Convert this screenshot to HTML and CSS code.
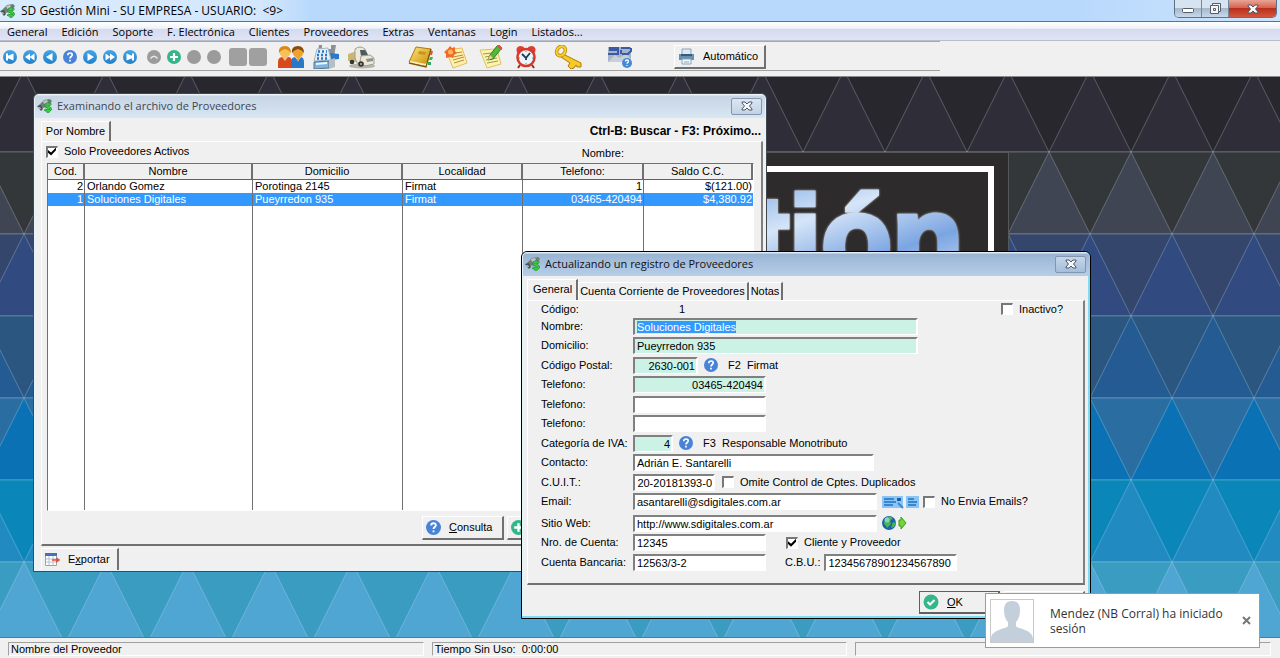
FILE: index.html
```html
<!DOCTYPE html>
<html lang="es">
<head>
<meta charset="utf-8">
<title>SD Gestión Mini</title>
<link rel="stylesheet" href="styles.css">
</head>
<body>
<svg class="defs" aria-hidden="true">
  <defs>
    <linearGradient id="blue" x1="0" y1="0" x2="0" y2="1"><stop offset="0" stop-color="#45a5e8"/><stop offset="1" stop-color="#2380c8"/></linearGradient>
    <linearGradient id="gold" x1="0" y1="0" x2="1" y2="1"><stop offset="0" stop-color="#ffe680"/><stop offset="1" stop-color="#c98a00"/></linearGradient>
    <symbol id="app" viewBox="0 0 16 16">
      <path d="M1 8L7 2l6-1 2 2-4 6-6 1z" fill="#6d7f78"/><path d="M6 3l4-1 1 2-4 2z" fill="#b9c8c4"/><path d="M0 8l4-1 2 4-2 2z" fill="#4b5552"/><path d="M1 9l3 1-1 1z" fill="#fff"/>
      <path d="M14 7c-2-2-6-1-5 1 1 1.500 5 1 4.500 3.500-1 2-4 1.500-6 0M11 5v10" fill="none" stroke="#1d8f2b" stroke-width="2.600"/><path d="M14 7c-2-2-6-1-5 1 1 1.500 5 1 4.500 3.500-1 2-4 1.500-6 0M11 5v10" fill="none" stroke="#3fc94a" stroke-width="1.300"/>
    </symbol>
    <symbol id="help" viewBox="0 0 14 14"><circle cx="7" cy="7" r="7" fill="#4883d8"/><path d="M4.800 5.200c0-3 4.600-2.800 4.400-.2C9.100 6.500 7 6.600 7 8.500M7 9.800v1.700" fill="none" stroke="#fff" stroke-width="1.700"/></symbol>
    <symbol id="plus" viewBox="0 0 14 14"><circle cx="7" cy="7" r="7" fill="#35b58b"/><path d="M7 3v8M3 7h8" stroke="#fff" stroke-width="2.200"/></symbol>
    <symbol id="first" viewBox="0 0 14 14"><circle cx="7" cy="7" r="7" fill="url(#blue)"/><path d="M3 3.500h2v2.300L10.500 3.500v7L5 8.200v2.300H3z" fill="#fff"/></symbol>
    <symbol id="rew" viewBox="0 0 14 14"><circle cx="7" cy="7" r="7" fill="url(#blue)"/><path d="M2 7L7 3.500v7zM6.500 7l5-3.500v7z" fill="#fff"/></symbol>
    <symbol id="prev" viewBox="0 0 14 14"><circle cx="7" cy="7" r="7" fill="url(#blue)"/><path d="M3 7l6.500-4v8z" fill="#fff"/></symbol>
    <symbol id="cross" viewBox="0 0 12 10"><path d="M1 1h3l2 2 2-2h3v1L8.500 5 11 8v1H8L6 7 4 9H1V8l2.500-3L1 2z" fill="#f7f7f7" stroke="#4d566b"/></symbol>
  </defs>
</svg>

<header class="titlebar">
  <svg class="app-icon" aria-hidden="true"><use href="#app"/></svg>
  <h1 class="title">SD Gestión Mini - SU EMPRESA - USUARIO: &nbsp;&lt;9&gt;</h1>
  <div class="controls">
    <button class="ctl" aria-label="Minimizar"><svg width="14" height="12" viewBox="0 0 14 12"><rect x="1.500" y="5.500" width="11" height="4" rx="1" fill="#fff" stroke="#565d6b"/></svg></button>
    <button class="ctl" aria-label="Restaurar"><svg width="14" height="13" viewBox="0 0 14 13"><path d="M4.500 1.500h8v8h-2v2h-8v-8h2z" fill="#f4f6f8" stroke="#565d6b"/><path d="M4.500 3.500h6v6M5.500 6.500h2v2h-2z" fill="none" stroke="#565d6b"/></svg></button>
    <button class="ctl ctl-close" aria-label="Cerrar"><svg width="12" height="10"><use href="#cross"/></svg></button>
  </div>
</header>

<nav class="menubar">
  <a href="#">General</a><a href="#">Edición</a><a href="#">Soporte</a><a href="#">F. Electrónica</a><a href="#">Clientes</a><a href="#">Proveedores</a><a href="#">Extras</a><a href="#">Ventanas</a><a href="#">Login</a><a href="#">Listados...</a>
</nav>

<div class="toolbar">
  <div class="tools">
    <div class="nav-icons">
      <button class="tool" aria-label="Primero"><svg><use href="#first"/></svg></button>
      <button class="tool" aria-label="Página anterior"><svg><use href="#rew"/></svg></button>
      <button class="tool" aria-label="Anterior"><svg><use href="#prev"/></svg></button>
      <button class="tool" aria-label="Consulta"><svg><use href="#help"/></svg></button>
      <button class="tool flip" aria-label="Siguiente"><svg><use href="#prev"/></svg></button>
      <button class="tool flip" aria-label="Página siguiente"><svg><use href="#rew"/></svg></button>
      <button class="tool flip" aria-label="Último"><svg><use href="#first"/></svg></button>
    </div>
    <div class="nav-icons">
      <button class="tool" aria-label="Subir"><svg viewBox="0 0 14 14"><circle cx="7" cy="7" r="7" fill="#9b9b9b"/><path d="M3.500 8.500Q7 4 10.500 8.500" fill="none" stroke="#e8e8e8" stroke-width="1.500"/></svg></button>
      <button class="tool" aria-label="Agregar"><svg><use href="#plus"/></svg></button>
      <button class="tool" aria-label="Cambiar"><svg viewBox="0 0 14 14"><circle cx="7" cy="7" r="7" fill="#9b9b9b"/></svg></button>
      <button class="tool" aria-label="Borrar"><svg viewBox="0 0 14 14"><circle cx="7" cy="7" r="7" fill="#9b9b9b"/></svg></button>
    </div>
    <div class="squares"><button class="square" aria-label="Aceptar"></button><button class="square" aria-label="Cancelar"></button></div>
    <div class="big-icons">
      <button class="big" aria-label="Clientes"><svg viewBox="0 0 28 24"><path d="M1 23v-6q0-5 5-5h5q4 0 4 5v6z" fill="#d84a1c"/><path d="M5 12l3 4 3-4z" fill="#ffb98a"/><circle cx="8" cy="7" r="5.500" fill="#f8c058"/><path d="M2 8q-1-7 6-7 6 0 6 7-2-3-6-4-4 1-6 4z" fill="#d98a14"/><path d="M14 23v-6q0-5 5-5h4q4 0 4 5v6z" fill="#2878cc"/><path d="M18 12l3 4 3-4z" fill="#fff"/><path d="M19 12l2 5 2-5z" fill="#f0a030"/><circle cx="21" cy="7" r="5.500" fill="#efa22c"/><path d="M15 8q-1-7 6-7 6 0 6 7-2-3-6-4-4 1-6 4z" fill="#8a4a14"/></svg></button>
      <button class="big" aria-label="Facturación"><svg viewBox="0 0 28 24"><path d="M7 0h17l-2 12-17 1z" fill="#8b9195"/><path d="M10 0h9v4h-9z" fill="#f0f2f2"/><path d="M18 8l9 1v5l-8 1z" fill="#2878cc"/><path d="M5 4l11-1 3 12-17 1z" fill="#e6edf2" stroke="#a6b5c2"/><path d="M6 6.500h2m2 0h2m2 0h1M5 10h2m2 0h2m2 0h2M5 13.500h2m2 0h2m2 0h2" stroke="#2878cc" stroke-width="2.400"/><path d="M2 17l15-1v7L2 24z" fill="#7fb4e2" stroke="#51738e"/><path d="M4 19l11-1" stroke="#e9f5ff" stroke-width="2"/><path d="M17 15l6-2v9l-6 2z" fill="#b5bfc4"/></svg></button>
      <button class="big" aria-label="Proveedores"><svg viewBox="0 0 28 24"><ellipse cx="15" cy="21" rx="13" ry="2.500" fill="#b8b5ad"/><path d="M1 9l9-3v11l-9-1z" fill="#c9b675"/><path d="M8 4q5-4 10 0l3 7-4 9-7-2-2-5z" fill="#ece9de" stroke="#a19d8d"/><path d="M13 5l5 0 3 5-7 1z" fill="#4e5964"/><path d="M14 11l9-1 4 3v6l-9 2-5-4z" fill="#ede8d4" stroke="#a19d8d"/><path d="M19 14l7-1v3l-6 1z" fill="#8b9296"/><circle cx="14" cy="19" r="2.800" fill="#353535"/><circle cx="5" cy="17" r="2.300" fill="#353535"/><circle cx="14" cy="19" r="1" fill="#bbb"/></svg></button>
    </div>
    <div class="big-icons agenda">
      <button class="big" aria-label="Agenda"><svg viewBox="0 0 28 24"><path d="M9 2l15 2-5 17-17-4z" fill="url(#gold)" stroke="#a97c12"/><path d="M3 17l16 3 2-3" fill="none" stroke="#fff2bc" stroke-width="2"/><path d="M2 18l17 4 5-18" fill="none" stroke="#805707" stroke-width="1.300"/><path d="M12 6l7 1-1 3-7-1z" fill="#c9951c"/><path d="M24 6h2l-1 4h-2" fill="#e3542e"/><path d="M23 12h3l-1 3h-3" fill="#42b549"/><path d="M21 17h3v3h-3" fill="#2dab5e"/></svg></button>
      <button class="big" aria-label="Novedades"><svg viewBox="0 0 28 24"><path d="M4 5l16-2 5 15-14 5z" fill="#fff0aa" stroke="#e4bd5c"/><path d="M13 8l7-1M11 12l10-2M11 15l11-3M12 18l10-3" stroke="#b58a40"/><path d="M8 1l2 2 3-1v4l2 2-3 2-1 3-3-1-4 1v-4L2 7l3-2z" fill="#ef6b27"/><circle cx="8.500" cy="7" r="2.500" fill="#ffb45d"/></svg></button>
      <button class="big" aria-label="Notas"><svg viewBox="0 0 28 24"><path d="M3 5l17-1 4 15-14 4z" fill="#fff3a8" stroke="#d6c468"/><path d="M6 9l9-1M8 12l6-1M9 15l11-2M10 18l11-2" stroke="#9d9464"/><path d="M11 15l2-5 7-9 4 3-8 10z" fill="#54b838" stroke="#2d7e22"/><path d="M20 1l2-1 3 3-1 2z" fill="#df4d46" stroke="#df4d46"/><path d="M11 15l2-5 3 3z" fill="#f4cf90"/></svg></button>
      <button class="big" aria-label="Alarma"><svg viewBox="0 0 28 24"><path d="M8 20l-2 3M20 20l2 3" stroke="#913025" stroke-width="2"/><path d="M5 8q-2-6 3-7 4 0 5 3zM23 8q2-6-3-7-4 0-5 3z" fill="#dd3e30"/><circle cx="14" cy="12.500" r="8.500" fill="#e7f5fd" stroke="#d6392b" stroke-width="2.500"/><path d="M10 9l4 4 4-5M14 13v2" fill="none" stroke="#25394b" stroke-width="1.800"/><path d="M14 6v1M7 13h1M14 19v-1M21 13h-1" stroke="#4b91c1"/></svg></button>
    </div>
    <button class="big key" aria-label="Claves"><svg viewBox="0 0 28 24"><path d="M9 9l18 9v4h-4l-1-2-2 3-3 1-3-3 2-3-9-6z" fill="#f5c926" stroke="#ac7c08"/><ellipse cx="7" cy="6" rx="4" ry="5" transform="rotate(35 7 6)" fill="#f1f1ed" stroke="#b88205" stroke-width="3.600"/><ellipse cx="7" cy="6" rx="4" ry="5" transform="rotate(35 7 6)" fill="none" stroke="#f8cf30" stroke-width="2.200"/></svg></button>
    <button class="big" aria-label="Ayuda SD"><svg viewBox="0 0 28 24"><path d="M2 2h23v15H2z" fill="#a9b3c6"/><path d="M2 17l7-7 4 3 7-4 5 5v3z" fill="#c8cfda"/><path d="M13 3H4v2h8v4H2M24 3h-9M15 9V5M16 9h6l3-3V3" fill="none" stroke="#395ba5" stroke-width="2"/><circle cx="21" cy="18" r="5" fill="#4389d4"/><path d="M19.500 16.500c0-2 3-2 3 0 0 1-1.500 1-1.500 2.200M21 20v1" fill="none" stroke="#fff" stroke-width="1.300"/></svg></button>
    <button class="push auto"><svg width="17" height="17" viewBox="0 0 17 17"><path d="M4 1h9v6H4z" fill="#dceaf4" stroke="#87a5bb"/><path d="M1 6h15v6H1z" fill="#6590b2"/><path d="M3 6h11v2H3z" fill="#3d5a74"/><path d="M4 11h9v5H4z" fill="#f3f8fb" stroke="#87a5bb"/><path d="M6 14h5" stroke="#87a5bb"/></svg><span>Automático</span></button>
  </div>
</div>

<main class="workspace">
  <svg class="pattern" aria-hidden="true">
    <defs>
      <pattern id="tri" patternUnits="userSpaceOnUse" x="24" y="-7" width="82" height="574">
        <g stroke="#d8ecf8" stroke-opacity=".25" stroke-width="1">
          <path d="M-1 0h84v82H-1z" fill="#28272d"/><path d="M0 0l41 82h-82zM82 0l41 82H41z" fill="#2f2e38"/>
          <path d="M-1 82h84v82H-1z" fill="#343739"/><path d="M41 82l41 82H0z" fill="#3f4552"/>
          <path d="M-1 164h84v82H-1z" fill="#35466c"/><path d="M0 164l41 82h-82zM82 164l41 82H41z" fill="#314b80"/>
          <path d="M-1 246h84v82H-1z" fill="#2a567f"/><path d="M41 246l41 82H0z" fill="#255b93"/>
          <path d="M-1 328h84v82H-1z" fill="#2a6da1"/><path d="M0 328l41 82h-82zM82 328l41 82H41z" fill="#0a72b4"/>
          <path d="M-1 410h84v82H-1z" fill="#0a87b8"/><path d="M41 410l41 82H0z" fill="#218ac0"/>
          <path d="M-1 492h84v82H-1z" fill="#3b9cc2"/><path d="M0 492l41 82h-82zM82 492l41 82H41z" fill="#50a6d2"/>
        </g>
      </pattern>
    </defs>
    <rect width="100%" height="100%" fill="url(#tri)"/>
  </svg>
  <svg class="logo" viewBox="0 0 738 320" aria-hidden="true">
    <defs><linearGradient id="steel" gradientUnits="userSpaceOnUse" x1="500" y1="40" x2="530" y2="130" spreadMethod="reflect"><stop offset="0" stop-color="#9dbfec"/><stop offset=".4" stop-color="#d6e5f8"/><stop offset="1" stop-color="#7ba5e2"/></linearGradient></defs>
    <rect x=".5" y=".5" width="737" height="319" fill="#2d2b2c" stroke="#56575a"/>
    <rect x="17" y="17" width="703" height="286" fill="none" stroke="#fff" stroke-width="6"/>
    <text class="logo-text" x="692" y="126" text-anchor="end">Gestión</text>
  </svg>

  <section class="window browse">
    <header class="win-title"><svg class="app-icon" aria-hidden="true"><use href="#app"/></svg><h2>Examinando el archivo de Proveedores</h2><button class="win-close" aria-label="Cerrar"><svg width="12" height="10"><use href="#cross"/></svg></button></header>
    <div class="browse-head"><button class="tab">Por Nombre</button><strong>Ctrl-B: Buscar - F3: Próximo...</strong></div>
    <div class="panel browse-panel">
      <div class="filter"><label class="check"><input type="checkbox" checked>Solo Proveedores Activos</label><span class="sort">Nombre:</span></div>
      <table class="grid">
        <colgroup><col class="c-cod"><col class="c-nom"><col class="c-dom"><col class="c-loc"><col class="c-tel"><col></colgroup>
        <thead><tr><th>Cod.</th><th>Nombre</th><th>Domicilio</th><th>Localidad</th><th>Telefono:</th><th>Saldo C.C.</th></tr></thead>
        <tbody>
          <tr><td class="num">2</td><td>Orlando Gomez</td><td>Porotinga 2145</td><td>Firmat</td><td class="num">1</td><td class="num">$(121.00)</td></tr>
          <tr class="selected"><td class="num">1</td><td>Soluciones Digitales</td><td>Pueyrredon 935</td><td>Firmat</td><td class="num">03465-420494</td><td class="num">$4,380.92</td></tr>
          <tr class="filler"><td></td><td></td><td></td><td></td><td></td><td></td></tr>
        </tbody>
      </table>
      <div class="actions"><button class="push"><svg width="15" height="15"><use href="#help"/></svg><span><u>C</u>onsulta</span></button><button class="push" aria-label="Agregar"><svg width="15" height="15"><use href="#plus"/></svg></button></div>
    </div>
    <button class="tab export"><svg width="17" height="16" viewBox="0 0 17 16"><path d="M1.500 1.500h11v12h-11z" fill="#fff" stroke="#9aa5b4"/><path d="M1 1h12v3H1z" fill="#4472b8"/><path d="M5 4v9M9 4v9M2 7h10M2 10h10" stroke="#b9c1cc"/><path d="M8 8h5M13 6.500L15 8l-2 1.500z" fill="#dc5237" stroke="#dc5237" stroke-width="1.500"/></svg><span>E<u>x</u>portar</span></button>
  </section>

  <section class="window active edit">
    <header class="win-title"><svg class="app-icon" aria-hidden="true"><use href="#app"/></svg><h2>Actualizando un registro de Proveedores</h2><button class="win-close" aria-label="Cerrar"><svg width="12" height="10"><use href="#cross"/></svg></button></header>
    <div class="tabs"><button class="tab current">General</button><button class="tab">Cuenta Corriente de Proveedores</button><button class="tab">Notas</button></div>
    <form class="panel form">
      <div class="row"><span class="lbl">Código:</span><span class="code">1</span><label class="check inactive"><input type="checkbox">Inactivo?</label></div>
      <div class="row"><label class="lbl" for="nombre">Nombre:</label><input id="nombre" class="field req w-xl" value="Soluciones Digitales" onfocus="this.select()" autofocus></div>
      <div class="row"><label class="lbl" for="dom">Domicilio:</label><input id="dom" class="field req w-xl" value="Pueyrredon 935"></div>
      <div class="row"><label class="lbl" for="cp">Código Postal:</label><input id="cp" class="field req right w-s" value="2630-001"><button type="button" class="mini" aria-label="Buscar código postal"><svg width="14" height="14"><use href="#help"/></svg></button><span class="hint">F2 &nbsp;Firmat</span></div>
      <div class="row"><label class="lbl" for="tel1">Telefono:</label><input id="tel1" class="field req right w-m" value="03465-420494"></div>
      <div class="row"><label class="lbl" for="tel2">Telefono:</label><input id="tel2" class="field w-m"></div>
      <div class="row"><label class="lbl" for="tel3">Telefono:</label><input id="tel3" class="field w-m"></div>
      <div class="row"><label class="lbl" for="iva">Categoría de IVA:</label><input id="iva" class="field req right w-xs" value="4"><button type="button" class="mini" aria-label="Buscar categoría"><svg width="14" height="14"><use href="#help"/></svg></button><span class="hint">F3 &nbsp;Responsable Monotributo</span></div>
      <div class="row"><label class="lbl" for="cont">Contacto:</label><input id="cont" class="field w-n" value="Adrián E. Santarelli"></div>
      <div class="row"><label class="lbl" for="cuit">C.U.I.T.:</label><input id="cuit" class="field right w-c" value="20-20181393-0"><label class="check after"><input type="checkbox">Omite Control de Cptes. Duplicados</label></div>
      <div class="row"><label class="lbl" for="mail">Email:</label><input id="mail" class="field w-l" value="asantarelli@sdigitales.com.ar"><button type="button" class="mini mail" aria-label="Enviar email"><svg width="38" height="14" viewBox="0 0 38 14"><path d="M0 1h21v12H0zM24 1h13v12H24z" fill="#8cc5f4"/><path d="M2 4h10M2 7h12M2 10h9M26 4h6M26 7h9M26 10h8" stroke="#1c72c4" stroke-width="1.500"/><path d="M15 3h4v3h-4z" fill="#1c5ea8"/><path d="M16 8l5 5" stroke="#3c88cc" stroke-width="2"/></svg></button><label class="check"><input type="checkbox">No Envia Emails?</label></div>
      <div class="row spaced"><label class="lbl" for="web">Sitio Web:</label><input id="web" class="field w-l" value="http://www.sdigitales.com.ar"><button type="button" class="mini mail" aria-label="Abrir sitio"><svg width="26" height="14" viewBox="0 0 26 14"><circle cx="7" cy="7" r="7" fill="#1b5fb8"/><path d="M3 2q4-3 8 0l-3 3 1 3-4 4q-1-3-3-4zM11 6l3 1-2 4-3 1z" fill="#47b94a"/><circle cx="5" cy="4" r="2.500" fill="#b7e6f5" opacity=".6"/><path d="M17 4h2V1l5 6-5 6v-3h-2z" fill="#72d435" stroke="#3a9d18"/></svg></button></div>
      <div class="row"><label class="lbl" for="nro">Nro. de Cuenta:</label><input id="nro" class="field w-m" value="12345"><label class="check both"><input type="checkbox" checked>Cliente y Proveedor</label></div>
      <div class="row"><label class="lbl" for="banco">Cuenta Bancaria:</label><input id="banco" class="field w-m" value="12563/3-2"><label class="cbu-lbl" for="cbu">C.B.U.:</label><input id="cbu" class="field w-m" value="12345678901234567890"></div>
    </form>
    <footer class="win-foot"><button class="push default"><svg width="16" height="16" viewBox="0 0 16 16"><circle cx="8" cy="8" r="7.500" fill="#35b58b"/><path d="M4.500 8l2.500 2.500L11.500 6" fill="none" stroke="#fff" stroke-width="2"/></svg><span><u>O</u>K</span></button><button class="push" aria-label="Cancelar"></button></footer>
  </section>
</main>

<footer class="status"><span>Nombre del Proveedor</span><span>Tiempo Sin Uso: &nbsp;0:00:00</span><span></span></footer>

<aside class="toast">
  <svg class="avatar" viewBox="0 0 44 44" aria-hidden="true"><rect x=".5" y=".5" width="43" height="43" fill="#fff" stroke="#c9c9c9"/><path d="M22 2c-6 0-8 4-8 9 0 6 2 10 4 12v4c-1 3-17 3-17 13v3h42v-3c0-10-16-10-17-13v-4c2-2 4-6 4-12 0-5-2-9-8-9z" fill="#c4cfdc"/></svg>
  <p>Mendez (NB Corral) ha iniciado sesión</p>
  <button class="toast-close" aria-label="Cerrar aviso"><svg width="9" height="9" viewBox="0 0 9 9"><path d="M1 1l7 7M8 1L1 8" stroke="#777" stroke-width="2"/></svg></button>
</aside>
</body>
</html>
```
FILE: styles.css
```css
* { box-sizing: border-box; }
body {
  margin: 0;
  height: 100vh;
  display: flex;
  flex-direction: column;
  position: relative;
  overflow: hidden;
  background: #f0f0f0;
  color: #000;
  font: 11px/13px "Liberation Sans", Arial, sans-serif;
}
button, input { font: inherit; color: inherit; margin: 0; padding: 0; }
button { background: none; border: 0; }
svg { display: block; flex: none; }
h1, h2, p { margin: 0; font-weight: 400; }
.defs { position: absolute; width: 0; height: 0; }
.app-icon { width: 16px; height: 16px; }

/* Main window frame */
.titlebar {
  flex: none;
  display: flex;
  align-items: center;
  gap: 5px;
  height: 22px;
  background: linear-gradient(90deg, #d9ebfd, #d3e7fd 260px, #b9d9fc 310px, #b9d9fc 1080px, #cde4fc);
  border-bottom: 1px solid #55729b;
}
.title { font: 12px/16px "Open Sans", sans-serif; }
.controls {
  display: flex;
  align-self: flex-start;
  margin: 0 3px 0 auto;
  height: 18px;
  border: 1px solid #5c7086;
  border-top: 0;
  border-radius: 0 0 5px 5px;
  overflow: hidden;
}
.ctl {
  width: 27px;
  display: grid;
  place-items: center;
  background: linear-gradient(#d6e3f0 45%, #a5b8cc 50%, #c7d9ea);
  border-right: 1px solid #74879b;
}
.ctl-close { width: 47px; border: 0; background: linear-gradient(#e8a496, #d8644f 45%, #b8301c 50%, #d4553b); }
.menubar {
  flex: none;
  display: flex;
  gap: 14px;
  height: 19px;
  padding: 1px 7px 0;
  background: linear-gradient(#fff, #eef2fa 35%, #d5dbed 40%, #dfe5f5);
  border-bottom: 1px solid #b6bccc;
}
.menubar a { color: #000; text-decoration: none; font: 11px/18px "Open Sans", sans-serif; }
.toolbar { flex: none; height: 36px; border-bottom: 1px solid #8a8a8a; }
.tools {
  display: flex;
  align-items: center;
  max-width: 940px;
  height: 30px;
  padding: 1px 0 0 3px;
  border-top: 1px solid #a8a8a8;
  border-bottom: 1px solid #a0a0a0;
}
.nav-icons { display: flex; gap: 6px; margin-right: 10px; }
.tool, .tool svg { width: 14px; height: 14px; }
.flip svg { transform: scaleX(-1); }
.squares { display: flex; gap: 2px; margin: 0 10px 0 -2px; }
.square { width: 18px; height: 18px; background: #a0a0a0; border-radius: 3px; }
.big-icons { display: flex; gap: 7px; }
.agenda { margin-left: 32px; }
.big, .big svg { width: 28px; height: 24px; }
.key { margin: 0 24px 0 14px; }
.push {
  display: flex;
  align-items: center;
  height: 24px;
  padding: 0 10px 0 3px;
  gap: 8px;
  background: #f0f0f0;
  border: 1px solid #fff;
  border-right: 2px solid #707070;
  border-bottom: 2px solid #707070;
}
.auto { width: 92px; margin-left: 40px; }

/* Desktop */
.workspace { position: relative; flex: 1; overflow: hidden; }
.pattern { position: absolute; inset: 0; width: 100%; height: 100%; }
.logo { position: absolute; top: 75px; left: 50%; width: 738px; margin-left: -369px; }
.logo-text {
  font: 700 116px "Liberation Sans", Arial, sans-serif;
  fill: url(#steel);
  stroke: url(#steel);
  stroke-width: 5px;
  filter: drop-shadow(0 0 1px #c9c0b8);
}

.window {
  position: absolute;
  display: flex;
  flex-direction: column;
  background: #f0f0f0;
  border: 1px solid #3e4752;
  border-radius: 6px 6px 0 0;
  box-shadow: inset 0 0 0 1px #e8f4fc;
}
.browse { left: 33px; top: 16px; width: 734px; height: 479px; padding: 0 3px 1px 7px; }
.edit { left: 521px; top: 174px; width: 570px; height: 368px; padding: 0 5px 4px; }
.active { border-color: #000; box-shadow: inset -2px -2px #7edcf4, inset 2px 1px #e4f4fb; }
.win-title {
  flex: none;
  display: flex;
  align-items: center;
  gap: 4px;
  height: 24px;
  margin: 0 -2px 0 -6px;
  padding: 0 3px 0 2px;
  border-radius: 5px 5px 0 0;
  background: linear-gradient(#f4f9fd, #c7d5e4 10%, #d9e6f3);
  color: #3c4654;
}
.win-title h2 { flex: 1; font: 11px/16px "Open Sans", sans-serif; }
.active .win-title { margin: 0 -4px; background: linear-gradient(#f4f9fd, #9ab5d4 10%, #b7cee8); color: #111; }
.win-close {
  display: grid;
  place-items: center;
  width: 31px;
  height: 17px;
  background: linear-gradient(#dbe6f2, #c3d2e3);
  border: 1px solid #8496ad;
  border-radius: 2px;
}
.active .win-close { background: linear-gradient(#c4d6ea, #a5bed9); }
.panel { border: 1px solid #fff; border-right: 2px solid #808080; border-bottom: 2px solid #707070; }
.tab { border: 1px solid #fff; border-bottom: 0; border-right: 2px solid #707070; background: #f0f0f0; }
.browse-head { display: flex; justify-content: space-between; height: 23px; align-items: flex-end; }
.browse-head .tab { height: 20px; width: 70px; }
.browse-head strong { font-size: 12px; line-height: 14px; align-self: center; padding: 2px 2px 0 0; }
.browse-panel { flex: 1; display: flex; flex-direction: column; padding: 1px 7px 4px 5px; }
.check { display: flex; align-items: center; gap: 6px; }
.check input {
  appearance: none;
  width: 12px;
  height: 12px;
  background: #fff;
  border: 1px solid #fff;
  border-top: 2px solid #777;
  border-left: 2px solid #777;
}
.check input:checked::before {
  content: "";
  display: block;
  width: 8px;
  height: 8px;
  background: #000;
  clip-path: polygon(0 30%, 38% 62%, 100% 0, 100% 35%, 38% 100%, 0 65%);
}
.filter { display: flex; height: 20px; padding-bottom: 3px; margin-left: -1px; }
.sort { margin: 4px 130px 0 auto; }
.grid {
  flex: 1;
  width: 100%;
  height: 350px;
  table-layout: fixed;
  border-collapse: separate;
  border-spacing: 0;
  background: #fff;
  border: 1px solid #707070;
  border-right-color: #fff;
  border-bottom-color: #fff;
}
.c-cod { width: 37px; }
.c-nom { width: 168px; }
.c-dom { width: 150px; }
.c-loc { width: 120px; }
.c-tel { width: 121px; }
.grid th {
  height: 16px;
  padding: 0;
  font-weight: 400;
  background: #f0f0f0;
  border-right: 2px solid #707070;
  border-bottom: 1px solid #606060;
}
.grid td { height: 13px; padding: 0 2px; border-right: 1px solid #707070; line-height: 13px; }
.grid td:last-child { border-right: 0; padding-right: 1px; }
.grid .filler td { height: auto; }
.grid .num { text-align: right; padding-right: 1px; }
.selected { background: #3399ff; color: #fff; }
.actions { display: flex; gap: 3px; margin: 5px 0 0 375px; }
.actions .push { width: 82px; }
.export { flex: none; display: flex; align-items: center; gap: 7px; width: 78px; height: 22px; margin-top: 2px; padding-left: 2px; }

/* Supplier form */
.tabs { display: flex; align-items: flex-end; height: 24px; }
.tabs .tab { height: 18px; padding: 0 2px 0 1px; }
.tabs .current { height: 21px; padding: 0 4px 1px 5px; }
.form { padding: 1px 20px 0 13px; height: 287px; }
.row { display: flex; align-items: center; height: 19px; }
.row:nth-child(odd) { height: 20px; }
.row:first-child { height: 15px; }
.spaced { margin-top: 2px; }
.lbl { width: 92px; flex: none; }
.code { width: 52px; text-align: right; }
.inactive { margin-left: auto; }
.field {
  height: 17px;
  padding: 0 1px 0 2px;
  background: #fff;
  border: 2px solid #808080;
  border-right: 2px solid #fff;
  border-bottom: 1px solid #fff;
  border-radius: 0;
  outline: 0;
}
.field::selection { background: #3399ff; color: #fff; }
.req { background: #ccf2e6; }
.right { text-align: right; padding-left: 1px; }
.w-xs { width: 40px; }
.w-s { width: 65px; }
.w-c { width: 82px; }
.w-m { width: 133px; }
.w-n { width: 241px; }
.w-l { width: 244px; }
.w-xl { width: 285px; }
.mini { margin: 0 10px 0 6px; }
.mail { margin: 0 3px 0 5px; }
.after { margin-left: 7px; }
.both { margin-left: 20px; }
.cbu-lbl { margin: 0 4px 0 19px; }
.win-foot { display: flex; justify-content: flex-end; gap: 4px; padding-top: 6px; }
.win-foot .push { width: 81px; height: 23px; }
.win-foot .default { border-color: #606060; }

.status {
  flex: none;
  display: flex;
  gap: 8px;
  height: 21px;
  padding: 4px 9px 2px 8px;
  border-top: 1px solid #707070;
}
.status span { flex: 1; border: 1px solid #a0a0a0; border-right-color: #fff; border-bottom-color: #fff; padding-left: 2px; }

.toast {
  position: absolute;
  right: 20px;
  bottom: 10px;
  display: flex;
  align-items: center;
  width: 275px;
  height: 55px;
  padding: 0 8px 0 4px;
  background: #fff;
  border: 1px solid #9b9b9b;
}
.avatar { width: 44px; height: 44px; }
.toast p { flex: 1; margin-left: 16px; font: 12px/15px "Open Sans", sans-serif; color: #333; }
```
